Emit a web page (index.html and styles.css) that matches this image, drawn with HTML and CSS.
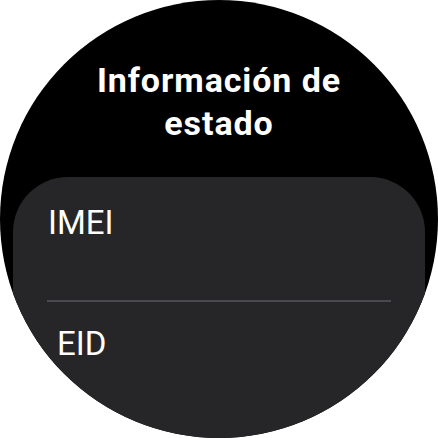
FILE: index.html
```html
<!DOCTYPE html>
<html lang="es">
<head>
<meta charset="utf-8">
<link rel="stylesheet" href="styles.css">
</head>
<body>
<div class="watch">
  <h1 class="title">Información de<br>estado</h1>
  <div class="card">
    <div class="row row-imei">IMEI</div>
    <div class="divider"></div>
    <div class="row row-eid">EID</div>
  </div>
</div>
</body>
</html>
```
FILE: styles.css
```css
html, body {
  margin: 0;
  padding: 0;
  background: #ffffff;
}
.watch {
  width: 438px;
  height: 438px;
  border-radius: 50%;
  background: #000000;
  overflow: hidden;
  display: flex;
  flex-direction: column;
  font-family: Roboto, "Noto Sans", sans-serif;
  color: #ffffff;
}
.title {
  margin: 59px 0 0 0;
  text-align: center;
  font-size: 34px;
  line-height: 43px;
  font-weight: 700;
  letter-spacing: 0.9px;
}
.card {
  margin: 32px 13px 0 13px;
  flex: 1;
  background: #262628;
  border-radius: 55px 55px 0 0;
}
.row {
  font-size: 33px;
  line-height: 40px;
  font-weight: 400;
}
.row-imei {
  height: 97px;
  padding: 26px 0 0 35px;
}
.divider {
  height: 2px;
  margin: 0 34px;
  background: #4a4950;
}
.row-eid {
  padding: 22px 0 0 44px;
}
```
